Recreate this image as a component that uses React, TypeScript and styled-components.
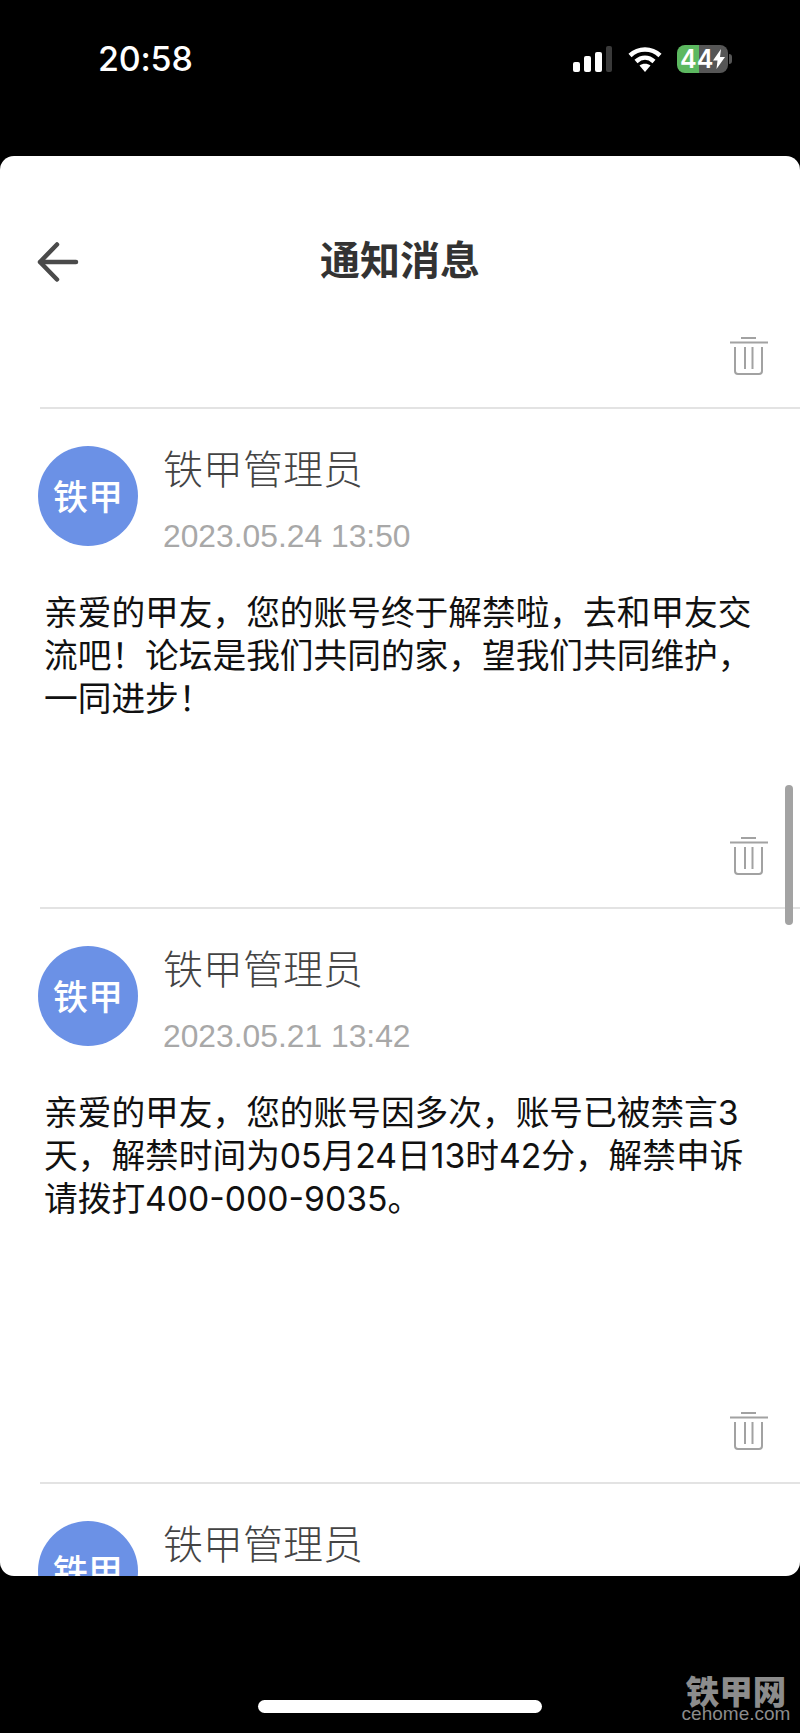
import React from "react";
import styled, { createGlobalStyle } from "styled-components";

const CJK = `"Liberation Sans", "Noto Sans CJK SC", sans-serif`;

const Global = createGlobalStyle`
  html, body { margin: 0; padding: 0; background: #000; }
  * { box-sizing: border-box; }
`;

const Page = styled.div`
  position: relative;
  width: 800px;
  height: 1733px;
  background: #000;
  overflow: hidden;
  display: flex;
  flex-direction: column;
  font-family: ${CJK};
`;

const StatusBar = styled.div`
  height: 156px;
  flex: none;
  display: flex;
  align-items: flex-start;
  justify-content: space-between;
  padding: 45px 72px 0 98px;
`;

const Clock = styled.div`
  font-family: Inter, sans-serif;
  font-weight: 500;
  font-size: 34px;
  line-height: 28px;
  letter-spacing: -0.2px;
  color: #fff;
`;

const StatusIcons = styled.div`
  display: flex;
  align-items: center;
  height: 28px;
`;

const SignalIcon = styled.svg`
  width: 39px;
  height: 26px;
  margin-right: 16px;
`;

const WifiIcon = styled.svg`
  width: 34px;
  height: 26px;
  margin-right: 15px;
`;

const Battery = styled.div`
  position: relative;
  width: 51px;
  height: 28px;
  border-radius: 8px;
  background: linear-gradient(to right, #5cb860 0 44%, #565656 44% 100%);
  display: flex;
  align-items: center;
  justify-content: flex-start;
  padding-left: 3px;
  color: #fff;
  font-family: Inter, sans-serif;
  font-weight: 600;
  font-size: 25px;
  letter-spacing: 0;
  &::after {
    content: "";
    position: absolute;
    right: -4px;
    top: 9px;
    width: 3px;
    height: 10px;
    border-radius: 0 3px 3px 0;
    background: #565656;
  }
`;

const BoltIcon = styled.svg`
  width: 12px;
  height: 20px;
  flex: none;
`;

const Card = styled.div`
  position: relative;
  flex: none;
  height: 1420px;
  background: #fff;
  border-radius: 14px;
  overflow: hidden;
`;

const Header = styled.div`
  height: 144px;
  padding-top: 78px;
  display: flex;
  justify-content: center;
  position: relative;
`;

const BackButton = styled.svg`
  position: absolute;
  left: 37px;
  top: 86px;
  width: 42px;
  height: 40px;
`;

const Title = styled.div`
  font-family: "Noto Sans CJK SC", sans-serif;
  font-size: 40px;
  font-weight: 700;
  line-height: 48px;
  color: #333;
`;

const Item = styled.div<{ $first?: boolean }>`
  margin-left: 40px;
  padding-top: ${(p) => (p.$first ? "36px" : "37px")};
  padding-bottom: 31px;
  border-bottom: 2px solid #e3e3e3;
  display: flex;
  flex-direction: column;
`;

const ItemHead = styled.div`
  display: flex;
  align-items: flex-start;
  margin-left: -2px;
`;

const Avatar = styled.div`
  width: 100px;
  height: 100px;
  flex: none;
  border-radius: 50%;
  background: #6b91e6;
  color: #fff;
  display: flex;
  align-items: center;
  justify-content: center;
  padding-bottom: 3px;
  font-family: "Noto Sans CJK SC", sans-serif;
  font-weight: 500;
  font-size: 35px;
  line-height: 1;
`;

const Meta = styled.div`
  margin-left: 25px;
  display: flex;
  flex-direction: column;
`;

const Name = styled.div`
  font-family: "Noto Sans CJK SC", sans-serif;
  font-size: 40px;
  font-weight: 300;
  line-height: 48px;
  margin-top: -3px;
  color: #444;
`;

const Stamp = styled.div`
  font-family: "Liberation Sans", sans-serif;
  font-size: 31.800px;
  line-height: 40px;
  min-height: 40px;
  margin-top: 25px;
  color: #a8a8a8;
`;

const Body = styled.div<{ $minHeight: number }>`
  margin: 35px 0 0 4px;
  width: 718px;
  min-height: ${(p) => p.$minHeight}px;
  font-family: Inter, "Noto Sans CJK SC", sans-serif;
  font-size: 33.700px;
  line-height: 43px;
  color: #111;
`;

const TrashRow = styled.div`
  display: flex;
  justify-content: flex-end;
  padding-right: 32px;
`;

const TrashIcon = styled.svg`
  width: 38px;
  height: 40px;
`;

const ScrollThumb = styled.div`
  position: absolute;
  left: 785px;
  top: 629px;
  width: 8px;
  height: 140px;
  border-radius: 4px;
  background: #a3a3a3;
`;

const Bottom = styled.div`
  flex: 1;
  display: flex;
  justify-content: center;
  padding-top: 124px;
`;

const HomeBar = styled.div`
  width: 284px;
  height: 13px;
  border-radius: 7px;
  background: #fff;
`;

const Watermark = styled.div`
  position: absolute;
  left: 684px;
  top: 1675px;
  width: 104px;
  display: flex;
  flex-direction: column;
  align-items: center;
  color: #8c8c8c;
`;

const WatermarkMain = styled.div`
  font-family: "Noto Sans CJK SC", sans-serif;
  font-weight: 900;
  font-size: 33.500px;
  line-height: 30px;
  white-space: nowrap;
`;

const WatermarkSub = styled.div`
  font-family: "Liberation Sans", sans-serif;
  font-size: 19px;
  line-height: 17px;
  white-space: nowrap;
`;

const Trash = () => (
  <TrashRow>
    <TrashIcon viewBox="0 0 38 40" fill="none" stroke="#a2a2a2" strokeWidth="2">
      <path d="M11 2h15" />
      <path d="M0 6.500h38" />
      <path d="M5 11v24a3 3 0 0 0 3 3h21a3 3 0 0 0 3-3V11" />
      <path d="M15 11v22M22.500 11v22" />
    </TrashIcon>
  </TrashRow>
);

const Message = ({ stamp, text, minHeight }: { stamp: string; text: string; minHeight: number }) => (
  <Item>
    <ItemHead>
      <Avatar>铁甲</Avatar>
      <Meta>
        <Name>铁甲管理员</Name>
        <Stamp>{stamp}</Stamp>
      </Meta>
    </ItemHead>
    <Body $minHeight={minHeight}>{text}</Body>
    <Trash />
  </Item>
);

export default function App() {
  return (
    <Page>
      <Global />
      <StatusBar>
        <Clock>20:58</Clock>
        <StatusIcons>
          <SignalIcon viewBox="0 0 39 26">
            <rect x="0" y="16" width="7" height="10" rx="2" fill="#fff" />
            <rect x="11" y="10" width="7" height="16" rx="2" fill="#fff" />
            <rect x="22" y="6" width="7" height="20" rx="2" fill="#fff" />
            <rect x="33" y="0" width="6" height="26" rx="2" fill="#3a3a3a" />
          </SignalIcon>
          <WifiIcon viewBox="0 0 34 26" fill="none" stroke="#fff" strokeWidth="4.500">
            <path d="M2 9.500C10.500 1.500 23.500 1.500 32 9.500" />
            <path d="M8 15.500C13.500 10.500 20.500 10.500 26 15.500" />
            <path d="M17 26l-5.500-6.500c3-2.500 8-2.500 11 0z" fill="#fff" stroke="none" />
          </WifiIcon>
          <Battery>
            44
            <BoltIcon viewBox="0 0 12 20">
              <path d="M8 0L0 11.500h4.500L3.500 20 12 8H7z" fill="#fff" />
            </BoltIcon>
          </Battery>
        </StatusIcons>
      </StatusBar>
      <Card>
        <Header>
          <BackButton viewBox="0 0 42 40" fill="none" stroke="#4a4a4a" strokeWidth="4.500" strokeLinecap="round" strokeLinejoin="round">
            <path d="M20 2.500L3 20l17 17.500" />
            <path d="M3.500 20H39" />
          </BackButton>
          <Title>通知消息</Title>
        </Header>
        <Item $first>
          <Trash />
        </Item>
        <Message
          stamp="2023.05.24 13:50"
          text="亲爱的甲友，您的账号终于解禁啦，去和甲友交流吧！论坛是我们共同的家，望我们共同维护，一同进步！"
          minHeight={245}
        />
        <Message
          stamp="2023.05.21 13:42"
          text="亲爱的甲友，您的账号因多次，账号已被禁言3天，解禁时间为05月24日13时42分，解禁申诉请拨打400-000-9035。"
          minHeight={320}
        />
        <Message stamp="" text="" minHeight={100} />
        <ScrollThumb />
      </Card>
      <Bottom>
        <HomeBar />
      </Bottom>
      <Watermark>
        <WatermarkMain>铁甲网</WatermarkMain>
        <WatermarkSub>cehome.com</WatermarkSub>
      </Watermark>
    </Page>
  );
}
